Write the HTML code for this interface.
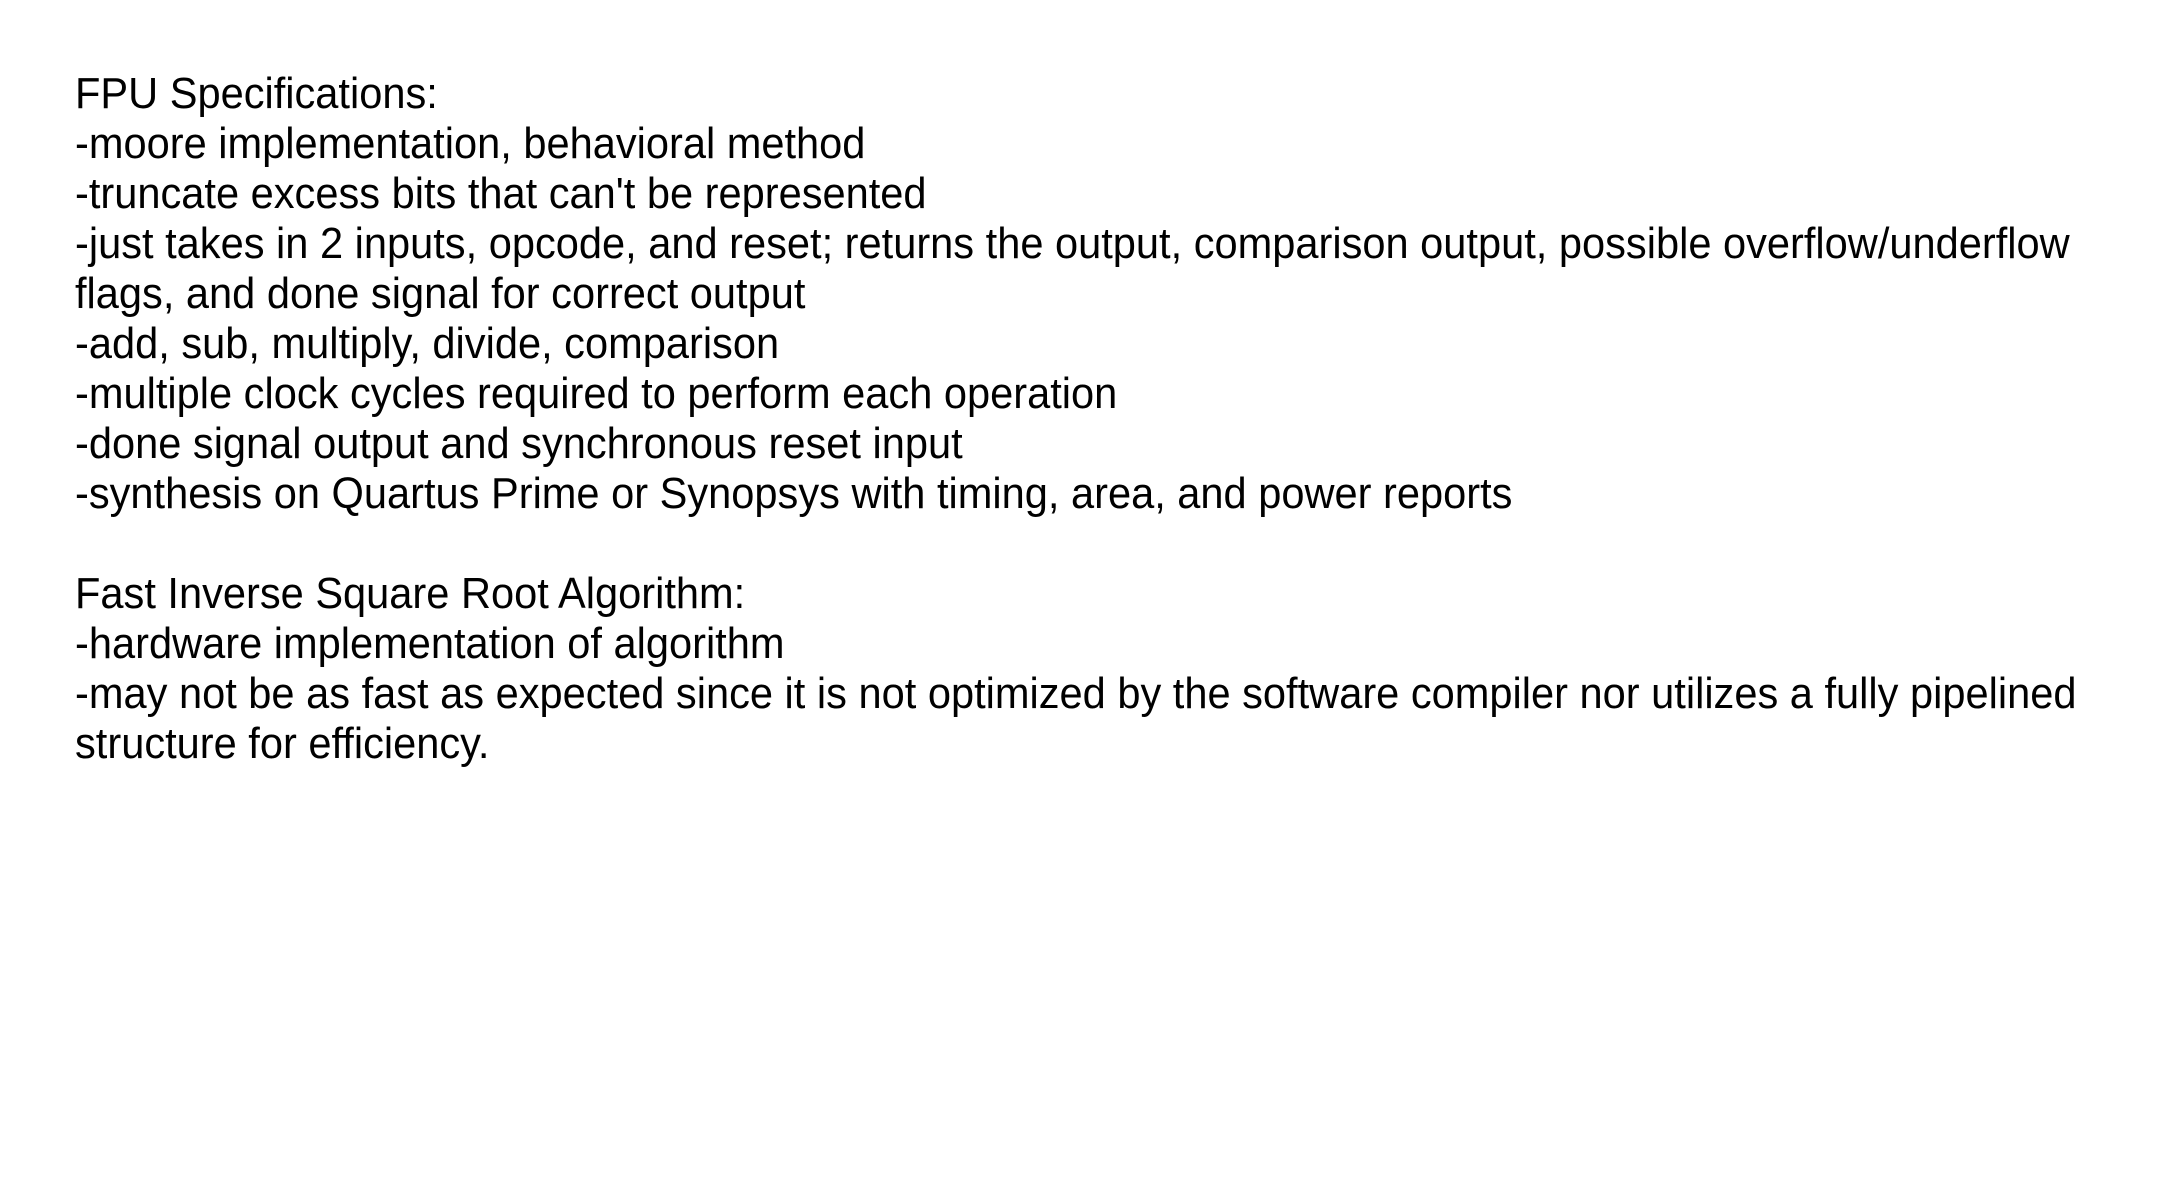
<!DOCTYPE html>
<html><head><meta charset="utf-8"><style>
html,body{margin:0;padding:0;background:#fff;}
body{width:2177px;height:1189px;overflow:hidden;}
.t{position:absolute;left:75px;top:68.6px;font-family:"Liberation Sans",sans-serif;font-size:44px;line-height:50px;color:#000;white-space:nowrap;transform:scaleX(0.945);transform-origin:0 0;}
</style></head><body>
<div class="t">FPU Specifications:<br>
-moore implementation, behavioral method<br>
-truncate excess bits that can't be represented<br>
-just takes in 2 inputs, opcode, and reset; returns the output, comparison output, possible overflow/underflow<br>
flags, and done signal for correct output<br>
-add, sub, multiply, divide, comparison<br>
-multiple clock cycles required to perform each operation<br>
-done signal output and synchronous reset input<br>
-synthesis on Quartus Prime or Synopsys with timing, area, and power reports<br>
<br>
Fast Inverse Square Root Algorithm:<br>
-hardware implementation of algorithm<br>
-may not be as fast as expected since it is not optimized by the software compiler nor utilizes a fully pipelined<br>
structure for efficiency.</div>
</body></html>
